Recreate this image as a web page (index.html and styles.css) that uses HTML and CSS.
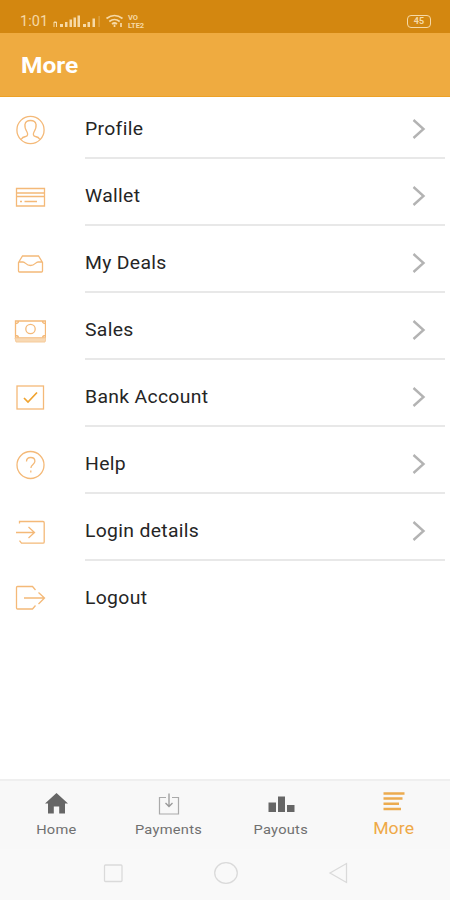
FILE: index.html
```
<!DOCTYPE html>
<html lang="en">
<head>
<meta charset="utf-8">
<title>More</title>
<link rel="stylesheet" href="styles.css">
</head>
<body>
<div class="status">
  <span class="time">1:01</span>
  <svg class="signals" viewBox="0 0 74 33">
    <g fill="#f6d9a6">
      <path d="M1.500 22h1v5h-1zM4 22h1v5H4zM2 21.500h2.500v1.500H2zM8 24h3v3H8zM13 22h2.500v5H13zM17.500 19.500H20V27h-2.500zM21.500 17.500H24V27h-2.500zM25.500 15.500H28V27h-2.500zM31 24h3v3h-3zM35.500 22H38v5h-2.500zM40.500 18.500H43V27h-2.500z"/>
      <path d="M46.500 16h1.200v11h-1.200z" opacity=".4"/>
    </g>
    <g fill="none" stroke="#f6d9a6" stroke-width="1.700">
      <path d="M54.500 18.500q8-6 16 0M57.300 21.500q5.200-4 10.400 0M60 24q2.500-2 5 0"/>
      <path d="M62.500 24.500v2.500M69 23v4"/>
    </g>
  </svg>
  <span class="volte"><b>VO</b><b>LTE2</b></span>
  <span class="battery">45</span>
</div>
<header><h1>More</h1></header>
<main>
  <div class="row first"><svg class="icon" viewBox="0 0 46 57"><circle cx="30.500" cy="29" r="13.600"/><path d="M21 38.500q1.500-2.500 4.500-3c2.500-.5 2.500-2.500 1.500-4.500-1.500-2.500-2.500-5-2-7.500q.5-4 5.500-4t5.500 4c.5 2.500-.5 5-2 7.500-1 2-1 4 1.500 4.500q3 .5 4.500 3"/></svg><div class="cell"><span>Profile</span><svg class="chev" viewBox="0 0 14 20"><path d="M1.500 1l10 9-10 9"/></svg></div></div>
  <div class="row"><svg class="icon" viewBox="0 0 46 57"><path d="M16.500 20.500h28v17.500h-28zM16.500 25h28M16.500 28.500h28M20 33.500h2M24.500 33.500h12.500"/></svg><div class="cell"><span>Wallet</span><svg class="chev" viewBox="0 0 14 20"><path d="M1.500 1l10 9-10 9"/></svg></div></div>
  <div class="row"><svg class="icon" viewBox="0 0 46 57"><path d="M18.500 27.500l4-6.500h16l4 6.500v8.500q0 1-1 1h-22q-1 0-1-1zM18.500 27h4.500c2.500 0 3 3.500 7.500 3.500s5-3.500 7.500-3.500h4.500"/></svg><div class="cell"><span>My Deals</span><svg class="chev" viewBox="0 0 14 20"><path d="M1.500 1l10 9-10 9"/></svg></div></div>
  <div class="row"><svg class="icon" viewBox="0 0 46 57"><path d="M15.500 19h30v17h-30zM15.500 21.500q3 0 3-2.500M42.500 19q0 2.500 3 2.500M15.500 33.500q3 0 3 2.500M42.500 36q0-2.500 3-2.500"/><path class="pale" d="M15 36h31l-1 4H16z"/><circle cx="30.500" cy="27" r="4.700"/></svg><div class="cell"><span>Sales</span><svg class="chev" viewBox="0 0 14 20"><path d="M1.500 1l10 9-10 9"/></svg></div></div>
  <div class="row"><svg class="icon" viewBox="0 0 46 57"><rect x="17" y="17" width="26.500" height="23"/><path class="strong" d="M24 29l4 4 9-9.500"/></svg><div class="cell"><span>Bank Account</span><svg class="chev" viewBox="0 0 14 20"><path d="M1.500 1l10 9-10 9"/></svg></div></div>
  <div class="row"><svg class="icon" viewBox="0 0 46 57"><circle cx="30.500" cy="29" r="13.500"/><path d="M26.500 25.500q0-4 4.200-4t4.200 3.800c0 3.200-4 3.200-4 6.700M30.800 34.500v2"/></svg><div class="cell"><span>Help</span><svg class="chev" viewBox="0 0 14 20"><path d="M1.500 1l10 9-10 9"/></svg></div></div>
  <div class="row"><svg class="icon" viewBox="0 0 46 57"><path d="M19.500 20.500v-2H43q1.200 0 1.200 1.200V39q0 1.200-1.200 1.200H21.500l-2-2.500M16 29.500h18.500M28.500 24l6 5.500-6 5.500"/></svg><div class="cell"><span>Login details</span><svg class="chev" viewBox="0 0 14 20"><path d="M1.500 1l10 9-10 9"/></svg></div></div>
  <div class="row last"><svg class="icon" viewBox="0 0 46 57"><path d="M35.500 20l-3-3.500H17.500q-1 0-1 1v20.500q0 1 1 1h15l3-3.500M24 28h20.500M38.500 22.500l6 5.500-6 6"/></svg><div class="cell"><span>Logout</span></div></div>
</main>
<nav class="tabs">
  <div class="tab"><svg viewBox="0 0 30 28"><path fill="#666" d="M15.500 2L4 12.500H7v10h5.800v-7h5.400v7h5.800v-10h3z"/></svg><span>Home</span></div>
  <div class="tab"><svg viewBox="0 0 30 28"><path fill="none" stroke="#aaa" stroke-width="1.200" d="M12 6.500H5.500V23h19V6.500H18"/><path fill="none" stroke="#999" stroke-width="1.300" d="M15 2.500v13M11.500 12l3.500 3.500 3.500-3.500"/></svg><span>Payments</span></div>
  <div class="tab"><svg viewBox="0 0 30 28"><path fill="#666" d="M2.500 11.500H10V21H2.500zM12 5.500h7V21h-7zM21 14h7.500v7H21z"/></svg><span>Payouts</span></div>
  <div class="tab active"><svg viewBox="0 0 30 28"><path fill="none" stroke="#ecab4f" stroke-width="2.400" d="M4.500 2.500h21M4.500 7.500h19M4.500 12.800h15.500M4.500 18h17.500"/></svg><span>More</span></div>
</nav>
<footer class="system">
  <svg viewBox="0 0 24 24"><rect x="3.500" y="4" width="17.500" height="16.500" rx="1"/></svg>
  <svg viewBox="0 0 24 24"><ellipse cx="12" cy="12" rx="11.300" ry="10.300"/></svg>
  <svg viewBox="0 0 24 24"><path d="M4 12L20.500 2.500v19z"/></svg>
</footer>
</body>
</html>
```
FILE: styles.css
```
* { box-sizing: border-box; }
body {
  margin: 0;
  width: 450px;
  height: 900px;
  display: flex;
  flex-direction: column;
  background: #fff;
  font-family: Roboto, "Liberation Sans", sans-serif;
  overflow: hidden;
}
svg { display: block; flex: none; }
.status {
  height: 33px;
  flex: none;
  display: flex;
  background: #d38710;
  color: #f6d9a6;
  padding: 0 19px 0 20px;
}
.time { width: 32px; font-size: 14.5px; line-height: 43px; letter-spacing: .1px; }
.signals { width: 74px; height: 33px; }
.volte { padding-top: 14px; margin-left: 2px; }
.volte b { display: block; font-size: 7.5px; line-height: 7.5px; height: 7.5px; letter-spacing: -.1px; }
.battery {
  margin: 15px 0 0 auto;
  width: 24px;
  height: 12.5px;
  border: 1.5px solid #f6d9a6;
  border-radius: 4px;
  font-size: 9px;
  font-weight: 700;
  line-height: 10.5px;
  text-align: center;
}
header {
  height: 64px;
  flex: none;
  padding: 0 21px;
  background: #efab40;
  border-bottom: 1px solid #eda126;
}
h1 {
  margin: 0;
  width: fit-content;
  color: #fff;
  font-size: 22.5px;
  font-weight: 700;
  line-height: 65px;
  transform: scaleX(1.09);
  transform-origin: 0 50%;
}
main { flex: 1; min-height: 0; }
.row { height: 67px; display: flex; align-items: flex-end; }
.first { height: 61px; }
.icon { width: 46px; height: 57px; margin-right: 39px; fill: none; stroke: #f4b978; stroke-width: 1.3; }
.icon .pale { fill: #f8d9b4; stroke: #f6cb9b; stroke-width: 1; }
.icon .strong { stroke: #f0a32f; stroke-width: 1.7; }
.cell {
  flex: 1;
  height: 58px;
  margin-right: 5px;
  margin-bottom: -1px;
  padding-right: 19px;
  border-bottom: 2px solid #e8e8e8;
  display: flex;
  align-items: center;
  justify-content: space-between;
  color: #252525;
  font-size: 18px;
  letter-spacing: .3px;
}
.cell span { margin-bottom: 2px; transform: scaleX(1.075); transform-origin: 0 50%; }
.last .cell { border-color: transparent; }
.chev { width: 14px; height: 20px; fill: none; stroke: #b3b3b3; stroke-width: 2.4; }
.tabs {
  height: 70px;
  margin-top: -1px;
  flex: none;
  display: flex;
  background: #f8f8f8;
  border-top: 2px solid #efefef;
}
.tab { flex: 1; display: flex; flex-direction: column; align-items: center; padding-top: 10px; color: #707070; font-size: 13.3px; letter-spacing: .25px; }
.tab svg { width: 30px; height: 28px; }
.tab span { line-height: 22px; transform: scaleX(1.1); }
.active { color: #efa947; font-size: 16px; letter-spacing: .1px; }
.active span { line-height: 20px; }
.system { height: 51px; flex: none; display: flex; justify-content: space-between; padding: 12px 100px 0 101px; background: #f9f9f9; }
.system svg { width: 24px; height: 24px; fill: none; stroke: #dadada; stroke-width: 1.3; }
```
